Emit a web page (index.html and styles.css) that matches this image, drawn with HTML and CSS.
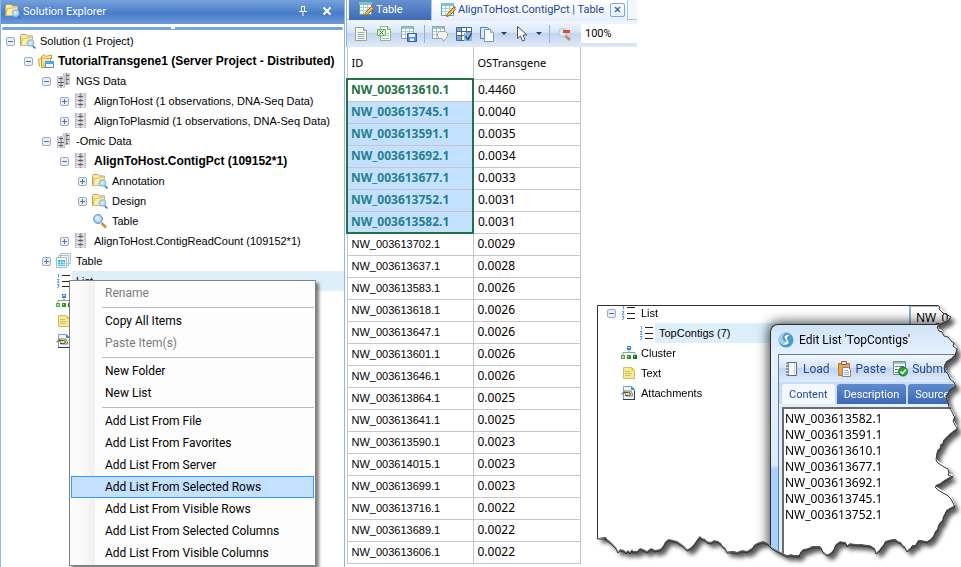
FILE: index.html
```html
<!DOCTYPE html>
<html lang="en">
<head>
  <meta charset="utf-8">
  <title>Solution Explorer</title>
  <link rel="stylesheet" href="styles.css">
</head>
<body>
  <!-- Icon set -->
  <svg class="sprite" aria-hidden="true">
    <defs>
      <linearGradient id="silver" x1="0" x2="1"><stop offset="0" stop-color="#b5b2bd"/><stop offset=".3" stop-color="#e6e4ea"/><stop offset=".5" stop-color="#98959f"/><stop offset=".7" stop-color="#e2e0e6"/><stop offset="1" stop-color="#bcb9c4"/></linearGradient>
      <linearGradient id="gold" x1="0" y1="0" x2="0" y2="1"><stop offset="0" stop-color="#fdf3b4"/><stop offset="1" stop-color="#edc94f"/></linearGradient>
      <radialGradient id="lens"><stop offset="0" stop-color="#e8f6fd"/><stop offset="1" stop-color="#8cc4e8"/></radialGradient>
      <clipPath id="torn" clipPathUnits="userSpaceOnUse">
        <path id="torn-edge" transform="translate(-597 -305)" d="M597.500 305.500H938L940 307L939 309L943 313L946 314L951 317L949 320L947 322L942 324L937 327L939 331L942 332L944 336L948 337L951 341L954 343L953 346L957 349L955 356L951 360L946 363L944 368L946 372L948 374L950 379L954 382L956 387L950 390L948 394L946 397L948 403L949 407L951 410L955 418L953 421L955 425L957 428L957 430L954 432L949 436L946 439L943 442L943 445L940 446L941 449L938 451L937 453L936 460L938 463L941 465L944 467L948 469L949 473L948 475L953 477L949 479L944 482L940 485L935 487L938 490L943 493L947 495L951 499L953 503L955 507L951 509L946 512L945 515L943 518L943 521L940 524L938 527L938 530L935 533L934 536L933 538L930 541L927 543L922 542L918 542L915 547L912 547L910 550L907 552L905 548L903 547L901 544L898 543L896 541L892 541L888 542L885 543L883 547L881 549L879 552L876 554L875 550L870 547L862 546L857 546L850 545L847 547L846 544L840 543L837 545L835 547L834 550L833 552L830 555L827 556L823 553L822 550L820 548L812 548L808 550L803 551L800 554L799 557L795 557L791 556L787 557L783 555L777 552L772 549L768 545L763 543L757 545L754 547L752 550L747 553L742 552L737 554L734 553L727 553L725 549L723 548L721 545L718 543L714 542L711 544L707 543L705 541L702 540L700 538L698 540L696 543L694 546L690 550L687 551L683 547L677 543L669 541L667 542L665 544L663 548L660 551L655 552L651 550L647 553L643 551L640 550L637 553L633 553L632 551L630 554L628 552L626 554L624 552L620 551L618 553L616 549L613 546L610 543L607 541L606 539L597.500 539Z"/>
      </clipPath>
    </defs>
    <symbol id="i-folder-search" viewBox="0 0 16 16">
      <path d="M.5 12.500v-10L2 1.500h4l1.500 1.500h5v9.500z" fill="url(#gold)" stroke="#b9a05a"/>
      <path d="M2.500 5.500l6-.5 1-1h3v8.500H1z" fill="#fbefae" stroke="#d6bf70"/>
      <path d="M12.500 12.500l3 3" stroke="#3b6ea3" stroke-width="1.500"/>
      <circle cx="10.500" cy="10" r="3.500" fill="url(#lens)" stroke="#a9bccb"/>
    </symbol>
    <symbol id="i-project" viewBox="0 0 16 16">
      <path d="M1.500 13.500l-1-7 3-1v-2l3-2 1 2 6-1.500v4" fill="#fff6d5" stroke="#d29a23"/>
      <path d="M3.500 14.500v-9l3-1 1 1.500 5-1v9z" fill="url(#gold)" stroke="#d29a23"/>
      <path d="M7.500 8.500h8v6h-8z" fill="#fff" stroke="#3b8edb"/>
      <path d="M7 8h9v3H7z" fill="#4ea5f0"/>
    </symbol>
    <symbol id="i-column" viewBox="0 0 16 16">
      <path d="M1 0h11v15H1z" fill="url(#silver)"/>
      <path d="M4 3.500h5M4 7.500h5M4 11.500h5" stroke="#5e5b64"/>
      <path d="M1 5.500h11M1 9.500h11M1 13.500h11" stroke="#fff" stroke-opacity=".4"/>
    </symbol>
    <symbol id="i-columns" viewBox="0 0 16 16">
      <path d="M7 0h7v12H7z" fill="url(#silver)"/>
      <path d="M1 3h8v12H1z" fill="url(#silver)"/>
      <path d="M10 2.500h3M10 6.500h3M10 10.500h2M3 5.500h4M2 9.500h6M3 12.500h4" stroke="#5e5b64"/>
    </symbol>
    <symbol id="i-lens" viewBox="0 0 16 16">
      <path d="M9.500 10l4.500 4.500" stroke="#d98a35" stroke-width="2.500"/>
      <circle cx="6" cy="6" r="4.500" fill="url(#lens)" stroke="#5a9cc8"/>
      <path d="M3.500 6a3 3 0 0 1 3-2.500" stroke="#fff" fill="none"/>
    </symbol>
    <symbol id="i-tables" viewBox="0 0 16 16">
      <path d="M4.500.500h10v10h-10zM2.500 2.500h10v10h-10z" fill="#f4fafa" stroke="#a3c4c1"/>
      <path d="M.5 4.500h10v10H.5z" fill="#fff" stroke="#a3bcc1"/>
      <path d="M2 7h7v6H2z" fill="#29b5e8"/>
      <path d="M2 9.500h7M2 11.500h7M4.500 7v6M7 7v6" stroke="#d8f4ff" stroke-width=".7"/>
    </symbol>
    <symbol id="i-list" viewBox="0 0 16 16">
      <path d="M6 2.500h8M6 8.500h8M6 13.500h8" stroke="#222"/>
      <path d="M1.500 1.500h1v3M1 6.500h2l-1.500 3h2M1 11.500h2l-1 1.500 1 .5-1 1H1" stroke="#5c9ad8" fill="none"/>
    </symbol>
    <symbol id="i-cluster" viewBox="0 0 16 16">
      <path d="M8 4v4M2 10V7.500h12V10" stroke="#999" fill="none"/>
      <path d="M6 1h4v4H6z" fill="#3d8be0"/>
      <path d="M0 10h4v4H0z" fill="#55b038"/><path d="M6 10h4v4H6z" fill="#2b9a25"/><path d="M12 10h4v4h-4z" fill="#0e7d12"/>
      <path d="M1 11h2v2H1z" fill="#b9e8a0"/><path d="M7 11h1v1H7zM13 11h1v1h-1zM7 2h2v1H7z" fill="#d5f2e5"/>
    </symbol>
    <symbol id="i-note" viewBox="0 0 16 16">
      <path d="M2.500 2.500h8l3 3v8h-11z" fill="#f7ec8b" stroke="#c9bd78"/>
      <path d="M10.500 2.500v3h3z" fill="#cfc400"/>
      <path d="M4 6.500h5M4 8.500h7M4 10.500h6" stroke="#cbbf78"/>
    </symbol>
    <symbol id="i-attach" viewBox="0 0 16 16">
      <path d="M2.500 1.500h8l3 3v10h-11z" fill="#eef5fd" stroke="#7d9cc4"/>
      <path d="M10 1v4h4z" fill="#3d91c6"/>
      <path d="M2 14.500h12M13.500 6v8" stroke="#27396d"/>
      <path d="M3 6h7l1.500 3v2H5z" fill="#efe690" stroke="#8d844e"/>
      <path d="M1 9.500q0-2 2-2h4.500q2 0 2 1.500t-2 1.500H4" fill="none" stroke="#555"/>
    </symbol>
    <symbol id="i-sheet-edit" viewBox="0 0 16 16">
      <path d="M1.500 1.500h12v12h-12z" fill="#fff" stroke="#55a59f"/>
      <path d="M1 1h13v3H1z" fill="#77c9bd"/>
      <path d="M2 6.500h11M2 9.500h11M5.500 4v9M9.500 4v9" stroke="#9fd2dc"/>
      <path d="M6.500 14.500l1-3 6-6 2 2-6 6z" fill="#f4bd3e" stroke="#946226"/>
      <path d="M12.500 5l1.500-1.500 2 2-1.500 1.500z" fill="#d9584f"/>
    </symbol>
    <symbol id="i-page" viewBox="0 0 16 16">
      <path d="M2.500 1.500h8l3 3v10h-11z" fill="#f2f8f2" stroke="#8da795"/>
      <path d="M10.500 1.500v3h3" fill="#d3e4d6" stroke="#8da795"/>
      <path d="M4.500 6.500h7M4.500 8.500h7M4.500 10.500h7M4.500 12.500h7" stroke="#9db1a4"/>
    </symbol>
    <symbol id="i-excel" viewBox="0 0 16 16">
      <path d="M3.500.500h7l3 3v11h-10z" fill="#f3faf0" stroke="#8db58d"/>
      <path d="M10.500.500v3h3" fill="#cfe6c8" stroke="#78a878"/>
      <path d="M.5 3.500h8v6h-8z" fill="#e6f4df" stroke="#6fae62"/>
      <path d="M2.500 4.500l4 4M6.500 4.500l-4 4" stroke="#30842c"/>
      <path d="M10 7.500h2M10 9.500h2M5 12.500h7" stroke="#a5cb9f"/>
    </symbol>
    <symbol id="i-sheet-save" viewBox="0 0 16 16">
      <path d="M.5.500h12v12H.5z" fill="#fff" stroke="#8ba5b8"/>
      <path d="M1 1h11v2H1z" fill="#92cdb2"/>
      <path d="M1 5.500h11M1 8.500h11M4.500 3v9M8.500 3v9" stroke="#b1c9d8"/>
      <path d="M6.500 7.500h9v8h-9z" fill="#5c8fd8" stroke="#315fa4"/>
      <path d="M8 8h6v3H8zM9 12.500h4V15H9z" fill="#e9f1fc"/>
    </symbol>
    <symbol id="i-sheet-tag" viewBox="0 0 16 16">
      <path d="M.5.500h12v12H.5z" fill="#fff" stroke="#8ba5b8"/>
      <path d="M1 1h11v2H1z" fill="#92cdb2"/>
      <path d="M1 5.500h11M1 8.500h11M4.500 3v9M8.500 3v9" stroke="#b1c9d8"/>
      <path d="M5.500 7.500l2-2h6l2 2v3l-2 2-2 3-1.500-3h-2.500l-2-2z" fill="#f3f3f1" stroke="#a5a3a0"/>
    </symbol>
    <symbol id="i-grid-check" viewBox="0 0 16 16">
      <path d="M.5 1.500h15v13H.5z" fill="#fff" stroke="#496883"/>
      <path d="M1 2h5v4H1zM11 6h4v4h-4zM1 10h5v4H1z" fill="#7cacd6"/>
      <path d="M1 5.500h14M1 9.500h14M5.500 2v12M10.500 2v12" stroke="#496883"/>
      <path d="M8 7h8v8H8z" fill="#91b9dc"/>
      <path d="M9.500 10l2.500 3.500 3.500-6" fill="none" stroke="#254f83" stroke-width="1.500"/>
    </symbol>
    <symbol id="i-copy" viewBox="0 0 16 16">
      <path d="M.5 1.500h7l2 2v9h-9z" fill="#d6e9fc" stroke="#557fae"/>
      <path d="M4.500 3.500h6l3 3v9h-9z" fill="#fff" stroke="#6f97c4"/>
      <path d="M10.500 3.500v3h3" fill="#bed9f3" stroke="#86abd0"/>
    </symbol>
    <symbol id="i-cursor" viewBox="0 0 16 16">
      <path d="M2.500.500v12l3-2.500 2 5 2.500-1-2-5h4z" fill="#fff" stroke="#4c5157"/>
    </symbol>
    <symbol id="i-zoom-out" viewBox="0 0 16 16">
      <path d="M8.500 10l4.500 4" stroke="#c08d4e" stroke-width="2.500"/>
      <circle cx="5.500" cy="6.500" r="4" fill="#dcebf7" stroke="#abc1d6"/>
      <path d="M6 4h7v3H6z" fill="#e8482f"/>
    </symbol>
    <symbol id="i-book" viewBox="0 0 16 16">
      <path d="M3.500 1.500h9v13h-9z" fill="#f7f9fc" stroke="#5e6b80"/>
      <path d="M2 1.500h3v13H2z" fill="#8793a8"/>
      <path d="M2 3.500h2M2 6.500h2M2 9.500h2M2 12.500h2" stroke="#dfe5ee"/>
      <path d="M10.500 2v12" stroke="#cbd4e3"/>
    </symbol>
    <symbol id="i-clipboard" viewBox="0 0 16 16">
      <path d="M1.500 2.500h11v12h-11z" fill="#f1a13c" stroke="#b5793a"/>
      <path d="M4.500.500h5v3h-5z" fill="#e7e7e7" stroke="#7c6a57"/>
      <path d="M5.500 6.500h6l2 2v7h-8z" fill="#f5f8fd" stroke="#7c8698"/>
      <path d="M7 9.500h4M7 11.500h5M7 13.500h5" stroke="#a9b5c6"/>
    </symbol>
    <symbol id="i-submit" viewBox="0 0 16 16">
      <path d="M.5.500h12v13H.5z" fill="#f7fafc" stroke="#6a89a3"/>
      <path d="M1 1h11v2H1z" fill="#9dc9b2"/>
      <path d="M2 5.500h3M6 5.500h5M2 8.500h3M2 11.500h3" stroke="#5f7180"/>
      <circle cx="10" cy="10.500" r="4.500" fill="#2ca637" stroke="#177526"/>
      <path d="M7.500 10.500l2 2 3.500-4" fill="none" stroke="#fff" stroke-width="1.500"/>
    </symbol>
    <symbol id="i-logo" viewBox="0 0 16 16">
      <circle cx="8" cy="8" r="7.500" fill="#4a9cc8"/>
      <path d="M8 .5a7.500 7.500 0 0 0-7 10Q4 13 8 13 10 11 6 8.500T8 .5z" fill="#9dcfe6"/>
      <path d="M12 2.500Q4 3 7.500 7q3 3-3 5.500Q13 13 10 8.500q-3-3 2-6z" fill="#fff"/>
    </symbol>
  </svg>

  <section class="explorer">
    <header class="explorer-title">
      <svg class="icon"><use href="#i-folder-search"/></svg>
      <h1>Solution Explorer</h1>
      <button class="title-button" aria-label="Pin"><svg class="icon-small" viewBox="0 0 10 10"><path d="M3 .5h4M3.500 0v5M6.500 0v5M1 5.500h8M5 6v4" fill="none" stroke="#fff"/></svg></button>
      <button class="title-button" aria-label="Close"><svg class="icon-small" viewBox="0 0 10 10"><path d="M1.500 1.500l7 7M8.500 1.500l-7 7" stroke="#fff" stroke-width="2"/></svg></button>
    </header>
    <div class="splitter"></div>

    <ul class="tree">
      <li>
        <div class="row"><button class="toggle open" aria-label="Collapse"></button><svg class="icon"><use href="#i-folder-search"/></svg><span>Solution (1 Project)</span></div>
        <ul>
          <li>
            <div class="row"><button class="toggle open" aria-label="Collapse"></button><svg class="icon"><use href="#i-project"/></svg><span class="strong">TutorialTransgene1 (Server Project - Distributed)</span></div>
            <ul>
              <li>
                <div class="row"><button class="toggle open" aria-label="Collapse"></button><svg class="icon"><use href="#i-columns"/></svg><span>NGS Data</span></div>
                <ul>
                  <li><div class="row"><button class="toggle" aria-label="Expand"></button><svg class="icon"><use href="#i-column"/></svg><span>AlignToHost (1 observations, DNA-Seq Data)</span></div></li>
                  <li><div class="row"><button class="toggle" aria-label="Expand"></button><svg class="icon"><use href="#i-column"/></svg><span>AlignToPlasmid (1 observations, DNA-Seq Data)</span></div></li>
                </ul>
              </li>
              <li>
                <div class="row"><button class="toggle open" aria-label="Collapse"></button><svg class="icon"><use href="#i-columns"/></svg><span>-Omic Data</span></div>
                <ul>
                  <li>
                    <div class="row"><button class="toggle open" aria-label="Collapse"></button><svg class="icon"><use href="#i-column"/></svg><span class="strong">AlignToHost.ContigPct (109152*1)</span></div>
                    <ul>
                      <li><div class="row"><button class="toggle" aria-label="Expand"></button><svg class="icon"><use href="#i-folder-search"/></svg><span>Annotation</span></div></li>
                      <li><div class="row"><button class="toggle" aria-label="Expand"></button><svg class="icon"><use href="#i-folder-search"/></svg><span>Design</span></div></li>
                      <li><div class="row leaf"><svg class="icon"><use href="#i-lens"/></svg><span>Table</span></div></li>
                    </ul>
                  </li>
                  <li><div class="row"><button class="toggle" aria-label="Expand"></button><svg class="icon"><use href="#i-column"/></svg><span>AlignToHost.ContigReadCount (109152*1)</span></div></li>
                </ul>
              </li>
              <li><div class="row"><button class="toggle" aria-label="Expand"></button><svg class="icon"><use href="#i-tables"/></svg><span>Table</span></div></li>
              <li><div class="row leaf selected"><svg class="icon"><use href="#i-list"/></svg><span>List</span></div></li>
              <li><div class="row leaf"><svg class="icon"><use href="#i-cluster"/></svg></div></li>
              <li><div class="row leaf"><svg class="icon"><use href="#i-note"/></svg></div></li>
              <li><div class="row leaf"><svg class="icon"><use href="#i-attach"/></svg></div></li>
            </ul>
          </li>
        </ul>
      </li>
    </ul>

    <div class="menu" role="menu">
      <button role="menuitem" disabled>Rename</button>
      <hr>
      <button role="menuitem">Copy All Items</button>
      <button role="menuitem" disabled>Paste Item(s)</button>
      <hr>
      <button role="menuitem">New Folder</button>
      <button role="menuitem">New List</button>
      <hr>
      <button role="menuitem">Add List From File</button>
      <button role="menuitem">Add List From Favorites</button>
      <button role="menuitem">Add List From Server</button>
      <button role="menuitem" class="active">Add List From Selected Rows</button>
      <button role="menuitem">Add List From Visible Rows</button>
      <button role="menuitem">Add List From Selected Columns</button>
      <button role="menuitem">Add List From Visible Columns</button>
    </div>
  </section>

  <main class="viewer">
    <div class="viewer-head">
      <div class="doc-tabs">
        <button class="doc-tab"><svg class="icon"><use href="#i-sheet-edit"/></svg>Table</button>
        <div class="doc-tab current">
          <button class="doc-name"><svg class="icon"><use href="#i-sheet-edit"/></svg>AlignToHost.ContigPct | Table</button>
          <button class="doc-close" aria-label="Close tab"><svg viewBox="0 0 7 7"><path d="M1 1l5 5M6 1l-5 5" stroke="#3f6db3" stroke-width="1.500"/></svg></button>
        </div>
      </div>
      <div class="toolbar">
        <button aria-label="Report"><svg class="icon"><use href="#i-page"/></svg></button>
        <button aria-label="Export to Excel"><svg class="icon"><use href="#i-excel"/></svg></button>
        <button aria-label="Save table"><svg class="icon"><use href="#i-sheet-save"/></svg></button>
        <i class="divider"></i>
        <button aria-label="Annotate"><svg class="icon"><use href="#i-sheet-tag"/></svg></button>
        <button aria-label="Select cells"><svg class="icon"><use href="#i-grid-check"/></svg></button>
        <button class="drop" aria-label="Copy"><svg class="icon"><use href="#i-copy"/></svg></button>
        <button class="drop" aria-label="Pointer"><svg class="icon"><use href="#i-cursor"/></svg></button>
        <i class="divider"></i>
        <button aria-label="Zoom out"><svg class="icon"><use href="#i-zoom-out"/></svg></button>
        <input class="zoom" type="text" value="100%" aria-label="Zoom">
      </div>
    </div>

    <div class="viewer-body">
      <table class="grid">
        <thead>
          <tr><th>ID</th><th>OSTransgene</th></tr>
        </thead>
        <tbody class="picked">
          <tr><td>NW_003613610.1</td><td>0.4460</td></tr>
          <tr><td>NW_003613745.1</td><td>0.0040</td></tr>
          <tr><td>NW_003613591.1</td><td>0.0035</td></tr>
          <tr><td>NW_003613692.1</td><td>0.0034</td></tr>
          <tr><td>NW_003613677.1</td><td>0.0033</td></tr>
          <tr><td>NW_003613752.1</td><td>0.0031</td></tr>
          <tr><td>NW_003613582.1</td><td>0.0031</td></tr>
        </tbody>
        <tbody>
          <tr><td>NW_003613702.1</td><td>0.0029</td></tr>
          <tr><td>NW_003613637.1</td><td>0.0028</td></tr>
          <tr><td>NW_003613583.1</td><td>0.0026</td></tr>
          <tr><td>NW_003613618.1</td><td>0.0026</td></tr>
          <tr><td>NW_003613647.1</td><td>0.0026</td></tr>
          <tr><td>NW_003613601.1</td><td>0.0026</td></tr>
          <tr><td>NW_003613646.1</td><td>0.0026</td></tr>
          <tr><td>NW_003613864.1</td><td>0.0025</td></tr>
          <tr><td>NW_003613641.1</td><td>0.0025</td></tr>
          <tr><td>NW_003613590.1</td><td>0.0023</td></tr>
          <tr><td>NW_003614015.1</td><td>0.0023</td></tr>
          <tr><td>NW_003613699.1</td><td>0.0023</td></tr>
          <tr><td>NW_003613716.1</td><td>0.0022</td></tr>
          <tr><td>NW_003613689.1</td><td>0.0022</td></tr>
          <tr><td>NW_003613606.1</td><td>0.0022</td></tr>
        </tbody>
      </table>

      <figure class="snippet">
        <div class="snippet-shadow">
          <div class="snippet-page">
            <ul class="tree">
              <li>
                <div class="row"><button class="toggle open" aria-label="Collapse"></button><svg class="icon"><use href="#i-list"/></svg><span>List</span></div>
                <ul>
                  <li><div class="row leaf selected"><svg class="icon"><use href="#i-list"/></svg><span>TopContigs (7)</span></div></li>
                </ul>
              </li>
              <li><div class="row leaf"><svg class="icon"><use href="#i-cluster"/></svg><span>Cluster</span></div></li>
              <li><div class="row leaf"><svg class="icon"><use href="#i-note"/></svg><span>Text</span></div></li>
              <li><div class="row leaf"><svg class="icon"><use href="#i-attach"/></svg><span>Attachments</span></div></li>
            </ul>
            <div class="side-pane">NW_0</div>

            <div class="dialog">
              <header class="dialog-title"><svg class="icon"><use href="#i-logo"/></svg><h2>Edit List 'TopContigs'</h2></header>
              <div class="dialog-body">
                <div class="dialog-tools">
                  <button><svg class="icon"><use href="#i-book"/></svg>Load</button>
                  <button><svg class="icon"><use href="#i-clipboard"/></svg>Paste</button>
                  <button><svg class="icon"><use href="#i-submit"/></svg>Submit</button>
                </div>
                <div class="dialog-tabs">
                  <button class="current">Content</button>
                  <button>Description</button>
                  <button>Source</button>
                </div>
                <textarea aria-label="Content" wrap="off">NW_003613582.1
NW_003613591.1
NW_003613610.1
NW_003613677.1
NW_003613692.1
NW_003613745.1
NW_003613752.1</textarea>
              </div>
            </div>
          </div>
        </div>
        <svg class="snippet-outline" aria-hidden="true"><use href="#torn-edge" fill="none" stroke="#333"/></svg>
      </figure>
    </div>
  </main>
</body>
</html>
```

FILE: styles.css
```css
* {
  box-sizing: border-box;
}

body {
  display: flex;
  height: 100vh;
  margin: 0;
  overflow: hidden;
  background: #ffffff;
  color: #000000;
  font-family: "Noto Sans", sans-serif;
  font-size: 12px;
}

button,
input,
textarea {
  margin: 0;
  padding: 0;
  border: none;
  background: none;
  color: inherit;
  font: inherit;
}

h1,
h2 {
  margin: 0;
  font-size: inherit;
  font-weight: normal;
}

.sprite {
  position: absolute;
  width: 0;
  height: 0;
}

.icon {
  flex: none;
  width: 16px;
  height: 16px;
}

.icon-small {
  display: block;
  width: 10px;
  height: 10px;
}

/* Explorer */

.explorer {
  position: relative;
  flex: none;
  width: 345px;
  border: solid #8eb4e3;
  border-width: 0 1px;
  background: #ffffff;
}

.explorer-title {
  display: flex;
  align-items: center;
  height: 24px;
  padding: 0 10px 2px 4px;
  background: linear-gradient(#76a1dc, #5085cd 45%, #487cc7 55%, #6a9ad9);
  color: #ffffff;
  font-family: Roboto, sans-serif;
  font-size: 11px;
}

.explorer-title h1 {
  flex: 1;
  padding-left: 2px;
}

.title-button {
  padding: 6px 2px 6px 12px;
}

.splitter {
  height: 3px;
  margin: 3px 1px 1px;
  border-radius: 2px;
  background:
    linear-gradient(#ffffff, #ffffff) center top / 4px 2px no-repeat,
    #76a3dd;
}

.tree,
.tree ul {
  margin: 0;
  padding: 0;
  list-style: none;
  font-family: "Liberation Sans", Arial, sans-serif;
  font-size: 11px;
}

.tree {
  padding-left: 5px;
}

.tree ul {
  padding-left: 18px;
}

.row {
  display: flex;
  align-items: center;
  height: 20px;
  white-space: nowrap;
}

.row span {
  flex: 1;
  padding-left: 4px;
  line-height: 20px;
}

.row.leaf {
  padding-left: 14px;
}

.row.selected span {
  background: #ddf0f9;
}

.row .strong {
  font-size: 12px;
  font-weight: bold;
}

.toggle {
  width: 9px;
  height: 9px;
  margin-right: 5px;
  border: 1px solid #9aabc6;
  border-radius: 2px;
  background:
    linear-gradient(#5a6fa0, #5a6fa0) center / 5px 1px no-repeat,
    linear-gradient(#5a6fa0, #5a6fa0) center / 1px 5px no-repeat,
    #e9eef7;
}

.toggle.open {
  background:
    linear-gradient(#5a6fa0, #5a6fa0) center / 5px 1px no-repeat,
    #e9eef7;
}

/* Context menu */

.menu {
  position: absolute;
  top: 280px;
  left: 68px;
  width: 247px;
  padding: 1px;
  border: 1px solid #808080;
  background: linear-gradient(90deg, #fcfcfc 8px, #f0f0f0 25px, #fdfdfd 25px);
  box-shadow: 3px 3px 3px rgba(0, 0, 0, 0.5);
  font-family: Roboto, sans-serif;
}

.menu button {
  display: block;
  width: 100%;
  height: 22px;
  padding-left: 33px;
  border: 1px solid transparent;
  text-align: left;
  line-height: 20px;
}

.menu button:disabled {
  color: #7c7c7c;
}

.menu button.active {
  border-color: #3399ff;
  background: #c4e0ff;
}

.menu hr {
  height: 1px;
  margin: 3px 0 2px 31px;
  border: none;
  background: #bdbdbd;
}

/* Viewer */

.viewer {
  flex: 1;
  min-width: 0;
  padding-left: 1px;
}

.viewer-head {
  width: 291px;
  border-left: 1px solid #8eb4e3;
  font-family: Roboto, sans-serif;
  font-size: 11px;
}

.doc-tabs {
  display: flex;
  height: 20px;
  padding-left: 2px;
  background: #f3f8ff;
  border-bottom: 1px solid #a9c7ee;
}

.doc-tab {
  display: flex;
  align-items: center;
  gap: 2px;
  width: 82px;
  height: 20px;
  padding: 0 0 2px 9px;
  background: linear-gradient(#6690d0, #3f6bb4);
  color: #ffffff;
}

.doc-tab.current {
  justify-content: space-between;
  width: 197px;
  height: 21px;
  padding: 0 2px 2px 8px;
  border: solid #a9c7ee;
  border-width: 0 1px;
  background: linear-gradient(#ffffff, #e6effc);
  color: #234a8e;
}

.doc-name {
  display: flex;
  align-items: center;
  gap: 2px;
  white-space: nowrap;
}

.doc-close {
  display: grid;
  place-items: center;
  width: 15px;
  height: 14px;
  border: 1px solid #7fa4d9;
  border-radius: 2px;
}

.doc-close svg {
  width: 7px;
  height: 7px;
}

.toolbar {
  display: flex;
  align-items: center;
  gap: 8px;
  height: 27px;
  padding-left: 6px;
  background: linear-gradient(#f2f7fe, #d9e6f7 45%, #c3d5ec 50%, #dfeafa);
}

.toolbar button {
  display: flex;
}

.toolbar .drop::after {
  content: "";
  align-self: center;
  margin-left: 5px;
  border: 3px solid transparent;
  border-top-color: #1f3b70;
  border-bottom-width: 0;
}

.divider {
  width: 1px;
  height: 18px;
  margin: 0 -1px;
  background: #8fb0dc;
}

.zoom {
  flex: 1;
  min-width: 0;
  height: 19px;
  padding-left: 4px;
  background: #ffffff;
}

.viewer-body {
  display: flex;
  align-items: flex-start;
  gap: 16px;
}

.grid {
  flex: none;
  width: 235px;
  border-collapse: collapse;
  table-layout: fixed;
}

.grid th,
.grid td {
  height: 22px;
  padding: 0 0 0 4px;
  border: 1px solid #c6c6c6;
  line-height: 20px;
  text-align: left;
  font-weight: normal;
}

.grid th {
  height: 32px;
  border-top: none;
  font-size: 11px;
}

.grid th:first-child {
  width: 126px;
}

.grid td:first-child {
  font-family: "Liberation Sans", Arial, sans-serif;
  font-size: 11px;
}

.grid .picked td:first-child {
  padding-left: 3px;
  border-right: 2px solid #217346;
  border-left: 2px solid #217346;
  background: #c4e0ff;
  color: #26808a;
  font-family: "Noto Sans", sans-serif;
  font-size: 12px;
  font-weight: bold;
}

.grid .picked tr:first-child td:first-child {
  border-top: 2px solid #217346;
  background: #ffffff;
  color: #217346;
}

.grid .picked tr:last-child td:first-child {
  border-bottom: 2px solid #217346;
}

/* Torn snippet */

.snippet {
  position: relative;
  flex: none;
  width: 364px;
  height: 262px;
  margin: 258px 0 0;
}

.snippet-shadow {
  height: 100%;
  filter: drop-shadow(4px 6px 2px rgba(0, 0, 0, 0.65));
}

.snippet-page {
  position: relative;
  height: 100%;
  background: #ffffff;
  clip-path: url(#torn);
}

.snippet-outline {
  position: absolute;
  inset: 0;
  width: 100%;
  height: 100%;
}

.snippet .tree {
  margin-top: -2px;
  padding-left: 10px;
}

.side-pane {
  position: absolute;
  top: 3px;
  left: 312px;
  width: 52px;
  height: 22px;
  padding-left: 5px;
  border-left: 2px solid #8eb4e3;
  background: linear-gradient(#b8b8b8, #b8b8b8) 0 0 / 100% 1px no-repeat #ffffff;
  line-height: 24px;
}

.dialog {
  position: absolute;
  top: 21px;
  left: 173px;
  display: flex;
  flex-direction: column;
  width: 191px;
  height: 241px;
  padding-left: 7px;
  border: solid #2b3038;
  border-width: 1px 0 0 1px;
  border-radius: 8px 0 0 0;
  background: linear-gradient(#cfe2f6, #e6f2fd 30px, #dcecfc 140px, #a9d2fb 144px);
  box-shadow: 0 0 12px 2px rgba(0, 0, 0, 0.7);
  font-family: Roboto, sans-serif;
}

.dialog-title {
  display: flex;
  align-items: center;
  gap: 5px;
  height: 29px;
}

.dialog-body {
  display: flex;
  flex: 1;
  flex-direction: column;
  min-height: 0;
  border: solid #5f7ea8;
  border-width: 1px 0 0 1px;
  background: #e3eefc;
}

.dialog-tools {
  display: flex;
  align-items: center;
  gap: 7px;
  height: 27px;
  padding-left: 5px;
  background: linear-gradient(#f2f7fe, #d9e6f7 45%, #c3d5ec 50%, #dfeafa);
  color: #234a8e;
}

.dialog-tools button {
  display: flex;
  align-items: center;
  gap: 3px;
}

.dialog-tabs {
  display: flex;
  gap: 2px;
  height: 22px;
  padding: 2px 0 0 3px;
  background: #c9dcf5;
  font-size: 11px;
}

.dialog-tabs button {
  padding: 0 7px;
  border-radius: 3px 3px 0 0;
  background: linear-gradient(#5f8bce, #3c69b3);
  color: #ffffff;
}

.dialog-tabs .current {
  background: #f4f9ff;
  color: #234a8e;
}

.dialog textarea {
  flex: 1;
  margin: 3px 0 0 3px;
  padding: 2px 0 0 1px;
  border: solid #6b6b6b;
  border-width: 2px 0 0 2px;
  background: #ffffff;
  font-family: "Noto Sans", sans-serif;
  line-height: 16px;
  resize: none;
  overflow: hidden;
}
```
